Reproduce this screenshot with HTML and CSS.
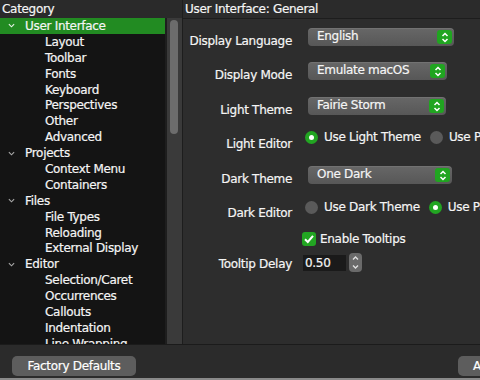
FILE: index.html
```html
<!DOCTYPE html>
<html lang="en">
  <head>
    <meta charset="UTF-8">
    <meta name="viewport" content="width=device-width, initial-scale=1.0">
    <title>Preferences</title>
    <link rel="stylesheet" href="styles.css">
  </head>
  <body>

    <div class="window">
      <div class="top">

        <aside class="sidebar">
          <div class="side-head">Category</div>
          <div class="side-body">
            <ul class="tree">
              <li class="branch selected"><svg class="chev" viewBox="0 0 8 5"><path d="M1 1 L4 4 L7 1"/></svg>User Interface</li>
              <li class="leaf">Layout</li>
              <li class="leaf">Toolbar</li>
              <li class="leaf">Fonts</li>
              <li class="leaf">Keyboard</li>
              <li class="leaf">Perspectives</li>
              <li class="leaf">Other</li>
              <li class="leaf">Advanced</li>
              <li class="branch"><svg class="chev" viewBox="0 0 8 5"><path d="M1 1 L4 4 L7 1"/></svg>Projects</li>
              <li class="leaf">Context Menu</li>
              <li class="leaf">Containers</li>
              <li class="branch"><svg class="chev" viewBox="0 0 8 5"><path d="M1 1 L4 4 L7 1"/></svg>Files</li>
              <li class="leaf">File Types</li>
              <li class="leaf">Reloading</li>
              <li class="leaf">External Display</li>
              <li class="branch"><svg class="chev" viewBox="0 0 8 5"><path d="M1 1 L4 4 L7 1"/></svg>Editor</li>
              <li class="leaf">Selection/Caret</li>
              <li class="leaf">Occurrences</li>
              <li class="leaf">Callouts</li>
              <li class="leaf">Indentation</li>
              <li class="leaf">Line Wrapping</li>
            </ul>
            <div class="scrollbar"><div class="thumb"></div></div>
          </div>
        </aside>

        <section class="main">
          <div class="main-head">User Interface: General</div>
          <div class="panel">

            <div class="row row-language">
              <span class="label">Display Language</span>
              <div class="popup popup-language">English
                <span class="arrows"><svg viewBox="0 0 8 11"><path d="M1.5 4 L4 1.5 L6.5 4 M1.5 7 L4 9.5 L6.5 7"/></svg></span>
              </div>
            </div>

            <div class="row row-mode">
              <span class="label">Display Mode</span>
              <div class="popup popup-mode">Emulate macOS
                <span class="arrows"><svg viewBox="0 0 8 11"><path d="M1.5 4 L4 1.5 L6.5 4 M1.5 7 L4 9.5 L6.5 7"/></svg></span>
              </div>
            </div>

            <div class="row row-light">
              <span class="label">Light Theme</span>
              <div class="popup popup-light">Fairie Storm
                <span class="arrows"><svg viewBox="0 0 8 11"><path d="M1.5 4 L4 1.5 L6.5 4 M1.5 7 L4 9.5 L6.5 7"/></svg></span>
              </div>
            </div>

            <div class="row row-radio row-light-editor">
              <span class="label">Light Editor</span>
              <div class="choices">
                <span class="radio on"></span><span class="choice">Use Light Theme</span>
                <span class="radio"></span><span class="choice">Use Paired Theme</span>
              </div>
            </div>

            <div class="row row-dark">
              <span class="label">Dark Theme</span>
              <div class="popup popup-dark">One Dark
                <span class="arrows"><svg viewBox="0 0 8 11"><path d="M1.5 4 L4 1.5 L6.5 4 M1.5 7 L4 9.5 L6.5 7"/></svg></span>
              </div>
            </div>

            <div class="row row-radio row-dark-editor">
              <span class="label">Dark Editor</span>
              <div class="choices">
                <span class="radio"></span><span class="choice">Use Dark Theme</span>
                <span class="radio on"></span><span class="choice">Use Paired Theme</span>
              </div>
            </div>

            <div class="row row-check">
              <span class="label"></span>
              <div class="checkline">
                <span class="checkbox"><svg viewBox="0 0 14 14"><path d="M3 7.2 L5.8 10 L11 3.8"/></svg></span>
                <span class="choice">Enable Tooltips</span>
              </div>
            </div>

            <div class="row row-delay">
              <span class="label">Tooltip Delay</span>
              <div class="spinner">
                <span class="field">0.50</span>
                <span class="stepper"><svg viewBox="0 0 13 19"><path d="M4 6.5 L6.5 4 L9 6.5 M4 12.5 L6.5 15 L9 12.5"/></svg></span>
              </div>
            </div>

          </div>
        </section>
      </div>

      <div class="bottom">
        <button type="button">Factory Defaults</button>
        <button type="button" class="apply">Apply</button>
      </div>
    </div>

  </body>
</html>
```

FILE: styles.css
```css
/* Base */
body {
  margin: 0;
  width: 480px;
  height: 380px;
  overflow: hidden;
  background-color: #2b2b2b;
  color: #f5f5f5;
  font-family: 'DejaVu Sans', 'Liberation Sans', sans-serif;
  font-size: 12px;
  letter-spacing: -0.3px;
  -webkit-text-stroke: 0.2px;
}

.window {
  display: flex;
  flex-direction: column;
  height: 380px;
  overflow: hidden;
}

.top {
  display: flex;
  height: 344px;
  border-bottom: 1px solid #1b1b1b;
}

/* Sidebar tree */
.sidebar {
  width: 182px;
  display: flex;
  flex-direction: column;
}

.side-head {
  height: 18px;
  line-height: 18px;
  padding-left: 2px;
  background-color: #2a2a2a;
}

.side-body {
  flex: 1;
  display: flex;
  min-height: 0;
}

.tree {
  list-style: none;
  margin: 0;
  padding: 0;
  width: 165px;
  background-color: #141414;
  overflow: hidden;
  border-right: 2px solid #1e1e1e;
}

.tree li {
  height: 15.9px;
  line-height: 16px;
  white-space: nowrap;
}

.tree .branch {
  display: flex;
  align-items: center;
  padding-left: 8px;
}

.tree .leaf {
  padding-left: 45px;
}

.tree .selected {
  background-color: #228b22;
}

.chev {
  width: 7px;
  height: 5px;
  margin-right: 10px;
  fill: none;
  stroke: #a8a8a8;
  stroke-width: 1.3;
}

.selected .chev {
  stroke: #e8f3e8;
}

.scrollbar {
  width: 15px;
  background-color: #3a3a3a;
  padding: 2px 4px 0 3px;
  box-sizing: border-box;
}

.thumb {
  height: 114px;
  background-color: #6c6c6c;
  border-radius: 4px;
}

/* Main panel */
.main {
  flex: 1;
  min-width: 0;
  display: flex;
  flex-direction: column;
  border-left: 1px solid #1d1d1d;
}

.main-head {
  height: 18px;
  line-height: 18px;
  padding-left: 2px;
}

.panel {
  flex: 1;
  overflow: hidden;
  border-top: 1px solid #1d1d1d;
  background-color: #2d2d2d;
  padding-top: 9px;
}

.row {
  display: flex;
  align-items: flex-start;
}

.label {
  width: 109px;
  flex-shrink: 0;
  text-align: right;
  margin-right: 11px;
  line-height: 16px;
  padding-top: 5px;
}

.row-language { height: 34px; }
.row-mode { height: 35px; }
.row-light { height: 34px; }
.row-light-editor { height: 35px; }
.row-dark { height: 35px; }
.row-dark-editor { height: 31px; }
.row-check { height: 21px; }

.row-light-editor .label { padding-top: 5px; }
.row-dark-editor .label { padding-top: 4px; }
.row-delay .label { padding-top: 3px; }

/* Popups */
.popup {
  height: 18px;
  line-height: 17px;
  margin-left: 5px;
  padding-left: 9px;
  box-sizing: border-box;
  border-radius: 4px;
  background: linear-gradient(#676767, #575757);
  box-shadow: inset 0 1px 0 rgba(255, 255, 255, 0.08);
  display: flex;
}

.popup-language { width: 146px; }
.popup-mode { width: 139px; }
.popup-light { width: 138px; }
.popup-dark { width: 144px; }

.arrows {
  margin-left: auto;
  margin-right: 2px;
  margin-top: 2px;
  width: 15px;
  height: 14px;
  border-radius: 3px;
  background-color: #20a520;
  display: flex;
  align-items: center;
  justify-content: center;
}

.arrows svg {
  width: 8px;
  height: 11px;
  fill: none;
  stroke: #ffffff;
  stroke-width: 1.5;
}

/* Radios and checkbox */
.choices,
.checkline {
  display: flex;
  align-items: center;
  white-space: nowrap;
}

.choices {
  margin-left: 2px;
  line-height: 13px;
}

.radio {
  flex-shrink: 0;
  width: 13px;
  height: 13px;
  border-radius: 50%;
  background-color: #5a5a5a;
  margin-right: 6px;
  display: flex;
  align-items: center;
  justify-content: center;
}

.radio.on {
  background-color: #22a522;
}

.radio.on::after {
  content: "";
  width: 5px;
  height: 5px;
  border-radius: 50%;
  background-color: #ffffff;
}

.choice + .radio {
  margin-left: 9px;
}

.checkline {
  margin-left: -1px;
  line-height: 14px;
}

.checkbox {
  width: 14px;
  height: 14px;
  border-radius: 3px;
  background-color: #22a522;
  margin-right: 4px;
}

.checkbox svg {
  width: 14px;
  height: 14px;
  fill: none;
  stroke: #ffffff;
  stroke-width: 2;
}

/* Spinner */
.spinner {
  display: flex;
  align-items: center;
}

.field {
  width: 43px;
  height: 16px;
  line-height: 16px;
  padding-left: 2px;
  box-sizing: border-box;
  background-color: #1a1a1a;
}

.stepper {
  width: 13px;
  height: 19px;
  margin-left: 3px;
  border-radius: 4px;
  background-color: #6a6a6a;
}

.stepper svg {
  width: 13px;
  height: 19px;
  fill: none;
  stroke: #e0e0e0;
  stroke-width: 1.4;
  -webkit-text-stroke: 0;
}

/* Bottom bar */
.bottom {
  flex: 1;
  display: flex;
  justify-content: space-between;
  align-items: flex-start;
  padding: 11px 0 0 12px;
  overflow: hidden;
  border-bottom: 2px solid #8a8a8a;
}

button {
  font-family: inherit;
  font-size: 12px;
  letter-spacing: -0.3px;
  -webkit-text-stroke: 0.2px;
  color: #ffffff;
  background-color: #5d5d5d;
  border: none;
  border-radius: 5px;
  height: 20px;
  line-height: 20px;
  padding: 0;
  width: 124px;
  white-space: nowrap;
  flex-shrink: 0;
}

.apply {
  width: 22px;
  padding-left: 15px;
  text-align: left;
  overflow: hidden;
  border-radius: 5px 0 0 5px;
}
```
